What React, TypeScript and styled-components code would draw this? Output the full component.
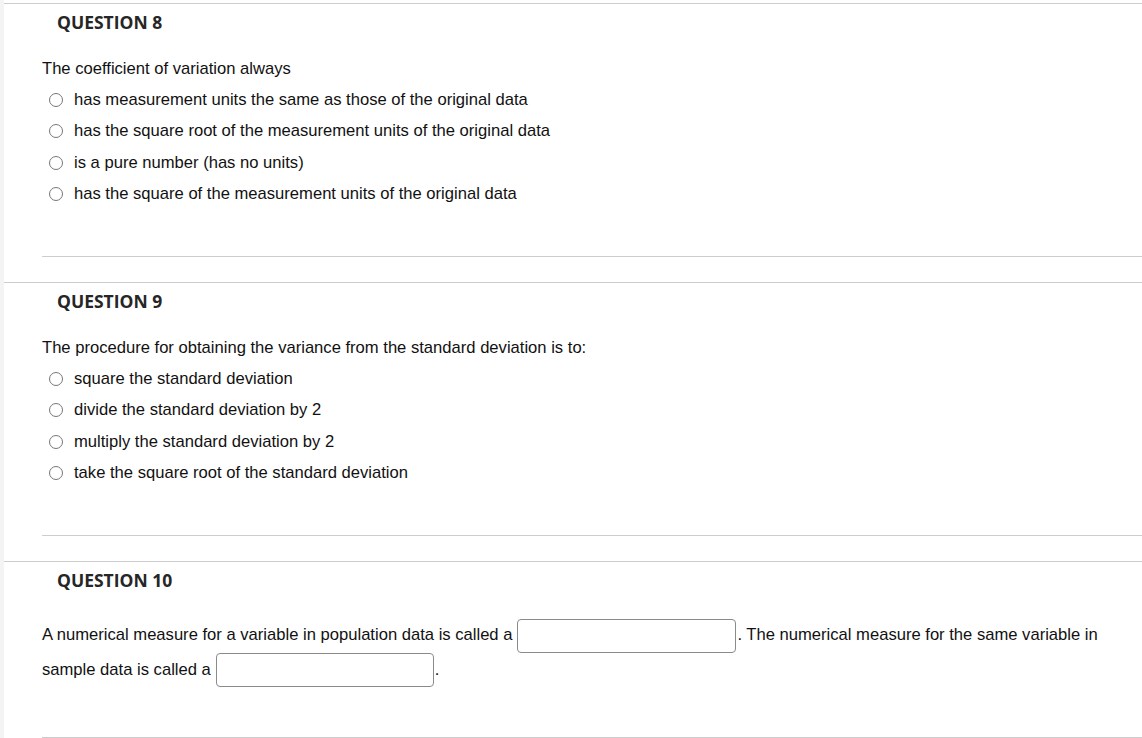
import React from 'react';
import styled, { createGlobalStyle } from 'styled-components';

const GlobalStyle = createGlobalStyle`
    html, body {
        margin: 0;
        padding: 0;
        background: #fff;
    }
    body {
        font-family: "Liberation Sans", Arial, sans-serif;
        color: #111;
    }
`;

// Page shell: thin grey gutter on the left, questions on the right
const Page = styled.div`
    display: flex;
    height: 738px;
    width: 1142px;
    overflow: hidden;
`;

const Gutter = styled.div`
    width: 4px;
    flex-shrink: 0;
    background: #f4f4f4;
`;

const Questions = styled.div`
    flex: 1;
    padding-top: 3px;
`;

const Section = styled.section`
    border-top: 1px solid #cdcdcd;
    padding-top: 7px;
    & + & {
        margin-top: 25px;
    }
`;

const Title = styled.h3`
    margin: 0 0 0 53px;
    font-family: "Open Sans", sans-serif;
    font-weight: 700;
    font-size: 17.5px;
    line-height: 22px;
    color: #262626;
`;

const Body = styled.div<{ tall?: boolean }>`
    padding: ${props => (props.tall ? '27px' : '26px')} 30px 0 38px;
    font-size: 16.6px;
`;

const Prompt = styled.p<{ tall?: boolean }>`
    margin: 0;
    line-height: ${props => (props.tall ? '34px' : '20px')};
`;

const Options = styled.ul`
    list-style: none;
    margin: 5px 0 0;
    padding: 0;
`;

const Option = styled.li`
    display: flex;
    align-items: center;
    height: 31.5px;
    padding-left: 7px;
`;

const Radio = styled.input`
    appearance: none;
    width: 14px;
    height: 14px;
    margin: 0 11px 0 0;
    border: 1px solid #767676;
    border-radius: 50%;
    background: #fff;
`;

const Blank = styled.input<{ w: number }>`
    display: inline-block;
    box-sizing: border-box;
    width: ${props => props.w}px;
    height: 34px;
    margin: 0 1px 0 5px;
    padding: 0;
    vertical-align: middle;
    border: 1px solid #8a8a8a;
    border-radius: 4px;
    background: #fff;
    font: inherit;
`;

const Divider = styled.hr<{ gap: number }>`
    margin: ${props => props.gap}px 0 0 38px;
    border: 0;
    border-top: 1px solid #cdcdcd;
`;

const q8 = [
    'has measurement units the same as those of the original data',
    'has the square root of the measurement units of the original data',
    'is a pure number (has no units)',
    'has the square of the measurement units of the original data',
];

const q9 = [
    'square the standard deviation',
    'divide the standard deviation by 2',
    'multiply the standard deviation by 2',
    'take the square root of the standard deviation',
];

const Choice: React.FC<{ name: string; options: string[] }> = ({ name, options }) => (
    <Options>
        {options.map(o => (
            <Option key={o}>
                <Radio type="radio" name={name} />
                <span>{o}</span>
            </Option>
        ))}
    </Options>
);

export default function App() {
    return (
        <>
            <GlobalStyle />
            <Page>
                <Gutter />
                <Questions>
                    <Section>
                        <Title>QUESTION 8</Title>
                        <Body>
                            <Prompt>The coefficient of variation always</Prompt>
                            <Choice name="q8" options={q8} />
                        </Body>
                        <Divider gap={46} />
                    </Section>
                    <Section>
                        <Title>QUESTION 9</Title>
                        <Body>
                            <Prompt>The procedure for obtaining the variance from the standard deviation is to:</Prompt>
                            <Choice name="q9" options={q9} />
                        </Body>
                        <Divider gap={46} />
                    </Section>
                    <Section>
                        <Title>QUESTION 10</Title>
                        <Body tall>
                            <Prompt tall>
                                A numerical measure for a variable in population data is called a
                                <Blank w={219} type="text" />. The numerical measure for the same variable in sample data is called a
                                <Blank w={218} type="text" />.
                            </Prompt>
                        </Body>
                        <Divider gap={50} />
                    </Section>
                </Questions>
            </Page>
        </>
    );
}
